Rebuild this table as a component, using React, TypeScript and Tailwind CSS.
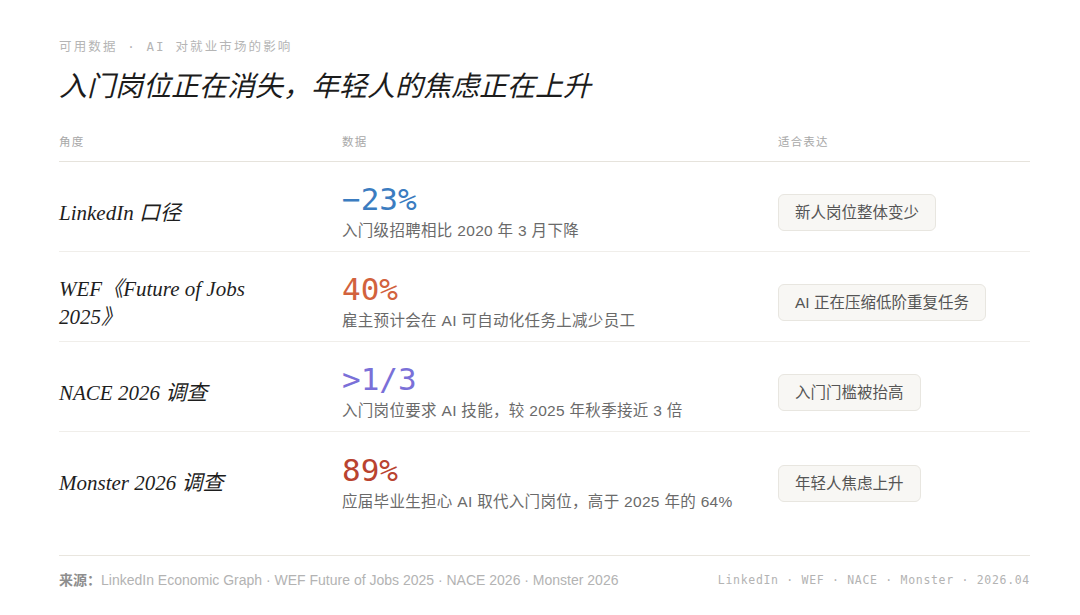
import React from "react";

const sans = "font-['Helvetica_Neue','Liberation_Sans','Noto_Sans_CJK_SC',sans-serif]";
const serif = "font-['Liberation_Serif','Noto_Sans_CJK_SC',serif]";
const mono = "font-['DejaVu_Sans_Mono','Noto_Sans_CJK_SC',monospace]";

const rows = [
  {
    angle: "LinkedIn 口径",
    value: "−23%",
    color: "text-[#3b7cc0]",
    desc: "入门级招聘相比 2020 年 3 月下降",
    tag: "新人岗位整体变少",
  },
  {
    angle: "WEF《Future of Jobs 2025》",
    value: "40%",
    color: "text-[#d2623d]",
    desc: "雇主预计会在 AI 可自动化任务上减少员工",
    tag: "AI 正在压缩低阶重复任务",
  },
  {
    angle: "NACE 2026 调查",
    value: ">1/3",
    color: "text-[#7a70d8]",
    desc: "入门岗位要求 AI 技能，较 2025 年秋季接近 3 倍",
    tag: "入门门槛被抬高",
  },
  {
    angle: "Monster 2026 调查",
    value: "89%",
    color: "text-[#b9432f]",
    desc: "应届毕业生担心 AI 取代入门岗位，高于 2025 年的 64%",
    tag: "年轻人焦虑上升",
  },
];

export default function App() {
  return (
    <div className={`w-[1080px] h-[615px] bg-white px-[59px] pt-[38px] flex flex-col ${sans}`}>
      <div className={`text-[12.5px] tracking-[0.17em] text-[#b5b5b5] ${mono}`}>
        可用数据 · AI 对就业市场的影响
      </div>
      <h1 className={`mt-[11px] text-[28px] leading-[38px] italic text-[#1c1c1c] ${serif}`}>
        入门岗位正在消失，年轻人的焦虑正在上升
      </h1>

      <div className="mt-[19px] w-[971px]">
        <div className="grid grid-cols-[283px_436px_1fr] h-[37px] items-center border-b border-[#e6e3dc] text-[11.5px] tracking-[0.1em] text-[#a8a8a8]">
          <div>角度</div>
          <div>数据</div>
          <div>适合表达</div>
        </div>
        {rows.map((r, i) => (
          <div
            key={i}
            className={`grid grid-cols-[283px_436px_1fr] h-[90px] pt-[13px] items-center ${
              i < rows.length - 1 ? "border-b border-[#f0eeea]" : ""
            }`}
          >
            <div className={`pr-[60px] text-[21px] leading-[28px] italic text-[#1e1e1e] ${serif}`}>
              {r.angle}
            </div>
            <div className="mb-[3px]">
              <div className={`text-[31px] leading-[36px] ${mono} ${r.color}`}>{r.value}</div>
              <div className="mt-[4px] text-[15.5px] leading-[20px] tracking-[0.02em] text-[#6a6a6a]">
                {r.desc}
              </div>
            </div>
            <div>
              <span className="inline-flex items-center h-[37px] px-[16px] rounded-[6px] border border-[#e8e6e0] bg-[#f8f7f4] text-[15.5px] text-[#555]">
                {r.tag}
              </span>
            </div>
          </div>
        ))}
      </div>

      <div className="mt-[33px] w-[971px] border-t border-[#e9e6df] pt-[14px] flex items-center justify-between">
        <div className="text-[14px] text-[#b3b3b3]">
          <span className="font-bold text-[#8e8e8e]">来源：</span>
          LinkedIn Economic Graph · WEF Future of Jobs 2025 · NACE 2026 · Monster 2026
        </div>
        <div className={`text-[11.5px] tracking-[0.06em] text-[#b3b3b3] ${mono}`}>
          LinkedIn · WEF · NACE · Monster · 2026.04
        </div>
      </div>
    </div>
  );
}
